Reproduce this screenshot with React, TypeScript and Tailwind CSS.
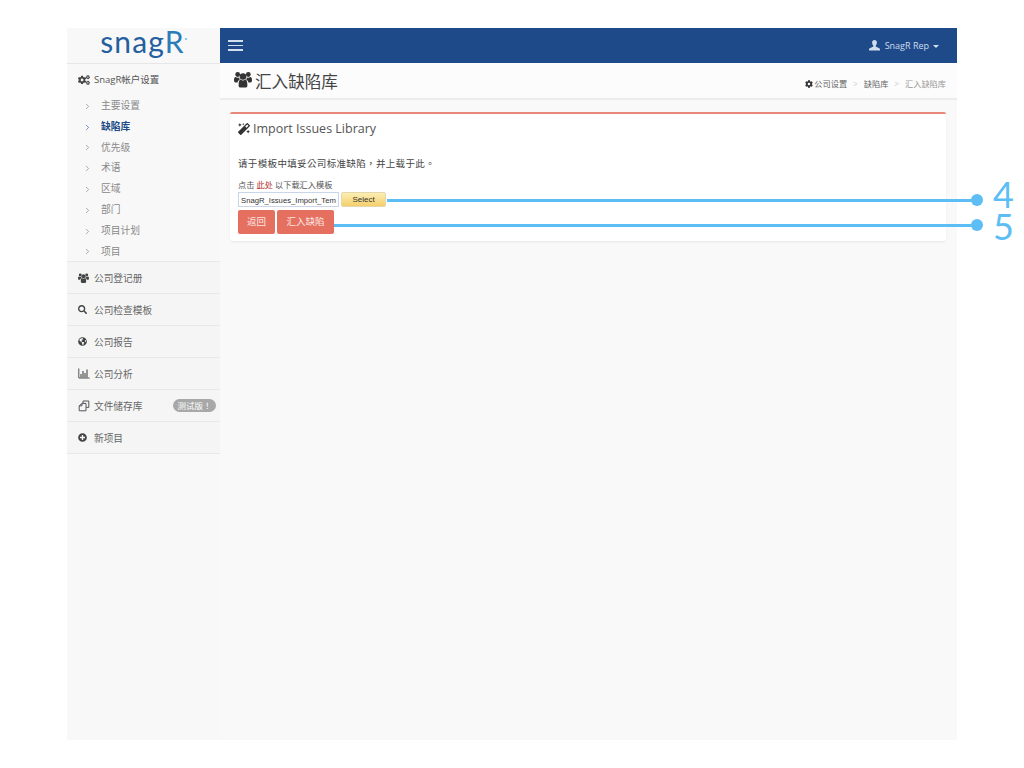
import React from "react";
import { FaSearch, FaGlobeAmericas, FaPlusCircle, FaMagic, FaCog, FaCogs } from "react-icons/fa";
import { ChevronRight } from "lucide-react";

const font = "font-['Open_Sans','Noto_Sans_CJK_SC',sans-serif]";
const sub = ["主要设置", "缺陷库", "优先级", "术语", "区域", "部门", "项目计划", "项目"];

function UsersIcon({ w, h }: { w: number; h: number }) {
  return (
    <svg width={w} height={h} viewBox="0 0 18 16" fill="currentColor">
      <circle cx="9" cy="5" r="3.3" />
      <circle cx="3.7" cy="3" r="2.4" />
      <circle cx="14.3" cy="3" r="2.4" />
      <path d="M4.6 14.2 C4.6 10.6 5.2 8.4 6.6 8.1 C7.4 8.8 8.2 9.1 9 9.1 C9.8 9.1 10.6 8.8 11.4 8.1 C12.8 8.4 13.4 10.6 13.4 14.2 C13.4 15.4 12.6 16 11.6 16 L6.4 16 C5.4 16 4.6 15.4 4.6 14.2 Z" />
      <path d="M0 8.6 C0 6.8 .5 5.6 1.6 5.5 C2.2 6 3 6.3 3.8 6.3 C4.4 6.3 4.9 6.2 5.3 5.9 C5.2 6.9 5.5 7.6 5.9 7.9 C4.6 8.4 3.8 9.6 3.6 11 L1.4 11 C.5 11 0 10.2 0 8.6 Z" />
      <path d="M18 8.6 C18 6.8 17.5 5.6 16.4 5.5 C15.8 6 15 6.3 14.2 6.3 C13.6 6.3 13.1 6.2 12.7 5.9 C12.8 6.9 12.5 7.6 12.1 7.9 C13.4 8.4 14.2 9.6 14.4 11 L16.6 11 C17.5 11 18 10.2 18 8.6 Z" />
    </svg>
  );
}

function UserIcon() {
  return (
    <svg width="11" height="11" viewBox="0 0 11 11" fill="currentColor">
      <path d="M5.5 0 C7 0 7.9 1 7.9 2.6 C7.9 4 7.2 5.2 6.7 5.7 L6.7 6.6 L10.2 8.2 C10.8 8.5 11 8.9 11 9.4 L11 10.4 L0 10.4 L0 9.4 C0 8.9 .2 8.5 .8 8.2 L4.3 6.6 L4.3 5.7 C3.8 5.2 3.1 4 3.1 2.6 C3.1 1 4 0 5.5 0 Z" />
    </svg>
  );
}

function BarsIcon() {
  return (
    <svg width="12" height="11" viewBox="0 0 12 11" fill="none" stroke="#555" strokeWidth="1">
      <path d="M.8 .5 L.8 10 L11.6 10" />
      <path d="M3 9.5 L3 6 M5 9.5 L5 3 M7 9.5 L7 5 M9 9.5 L9 1.5" strokeWidth="1.2" />
    </svg>
  );
}

function CopyIcon() {
  return (
    <svg width="12" height="12" viewBox="0 0 12 12" fill="none" stroke="#555" strokeWidth="1">
      <path d="M5 3.2 L5 1 L10.8 1 L10.8 7.4 L8.2 7.4" />
      <path d="M1.2 5.8 L4 3.4 L8 3.4 L8 10.8 L1.2 10.8 Z" />
      <path d="M4 3.4 L4 5.8 L1.2 5.8" />
    </svg>
  );
}

function MainItem({ icon, label, badge }: { icon: React.ReactNode; label: string; badge?: boolean }) {
  return (
    <div className="h-[32px] flex items-center bg-[#f5f5f5] border-b border-[#e8e8e8] pl-[11px] pr-[4px] text-[9.7px] text-[#666]">
      <span className="w-[16px] flex justify-start text-[#444]">{icon}</span>
      <span className="pt-[4px]">{label}</span>
      {badge && (
        <span className="ml-auto h-[13px] w-[43px] rounded-full bg-[#a8a8a8] text-white text-[8.5px] leading-[13px] text-center font-['Noto_Sans_CJK_TC',sans-serif]">测试版！</span>
      )}
    </div>
  );
}

export default function App() {
  return (
    <div className={`relative min-h-[768px] w-[1024px] overflow-hidden bg-white pt-[28px] ${font}`}>
      <div className="ml-[67px] w-[890px] h-[712px] flex bg-[#f9f9f9]">
        <aside className="w-[153px] shrink-0 bg-[#f8f8f8] flex flex-col">
          <div className="h-[36px] border-b border-[#e7e7e7] flex items-center justify-center pb-[9px]">
            <span className="font-['Lato',sans-serif] text-[30px] leading-none tracking-[1.2px] text-[#24609f]">
              snag<span className="text-[#2b7cb8]">R</span>
            </span>
            <span className="w-[2px] h-[2px] rounded-full bg-[#5bbcf0] mb-[4px]" />
          </div>
          <div className="h-[32px] flex items-center pl-[11px] text-[9.5px] text-[#555]">
            <FaCogs size={12} className="text-[#444] mr-[4px]" />
            <span className="pt-[1px]">SnagR帐户设置</span>
          </div>
          <ul className="h-[166px] border-b border-[#e8e8e8] flex flex-col">
            {sub.map((s, i) => (
              <li key={s} className={`h-[20.8px] shrink-0 flex items-center pl-[16px] text-[9.75px] ${i === 1 ? "text-[#1e4a86] font-bold" : "text-[#888]"}`}>
                <ChevronRight size={9} strokeWidth={1.6} className={`mr-[9px] ${i === 1 ? "text-[#1e4a86]" : "text-[#777]"}`} />
                <span>{s}</span>
              </li>
            ))}
          </ul>
          <MainItem icon={<UsersIcon w={11} h={10} />} label="公司登记册" />
          <MainItem icon={<FaSearch size={9} />} label="公司检查模板" />
          <MainItem icon={<FaGlobeAmericas size={9} />} label="公司报告" />
          <MainItem icon={<BarsIcon />} label="公司分析" />
          <MainItem icon={<CopyIcon />} label="文件储存库" badge />
          <MainItem icon={<FaPlusCircle size={9} />} label="新项目" />
        </aside>
        <main className="flex-1 flex flex-col">
          <header className="h-[35px] bg-[#1e4a8a] flex items-center justify-between pl-[8px] pr-[18px]">
            <div className="flex flex-col gap-[3px] w-[15px]">
              <span className="h-[1.5px] bg-[#d5e0ee]" />
              <span className="h-[1.5px] bg-[#d5e0ee]" />
              <span className="h-[1.5px] bg-[#d5e0ee]" />
            </div>
            <div className="flex items-center text-[#cfdcec] text-[9px] pt-[1px]">
              <span className="mr-[5px] mb-[2px]"><UserIcon /></span>
              <span>SnagR Rep</span>
              <span className="ml-[4px] w-0 h-0 border-x-[3px] border-x-transparent border-t-[3px] border-t-[#d5e0ee]" />
            </div>
          </header>
          <div className="h-[37px] bg-[#fcfcfc] border-b-2 border-[#ececec] flex items-center justify-between pl-[14px] pr-[11px]">
            <div className="flex items-center text-[#333]">
              <span className="mr-[3px] mb-[1px]"><UsersIcon w={18} h={17} /></span>
              <span className="text-[16.6px] text-[#444] pt-[3px]">汇入缺陷库</span>
            </div>
            <div className="flex items-center text-[8.2px] text-[#666] pt-[8px]">
              <FaCog size={8} className="text-[#333] mr-[1px]" />
              <span>公司设置</span>
              <span className="mx-[6px] text-[#ccc]">&gt;</span>
              <span>缺陷库</span>
              <span className="mx-[6px] text-[#ccc]">&gt;</span>
              <span className="text-[#999]">汇入缺陷库</span>
            </div>
          </div>
          <div className="pt-[12px] pl-[10px] pr-[11px]">
            <section className="h-[129px] bg-white border-t-2 border-[#e8887a] rounded-[2px] shadow-[0_1px_2px_rgba(0,0,0,0.08)] px-[8px] flex flex-col">
              <div className="flex items-center h-[26px] mt-[2px] text-[#444]">
                <FaMagic size={12} className="text-[#333] mr-[3px]" />
                <span className="text-[12.5px] text-[#555]">Import Issues Library</span>
              </div>
              <p className="mt-[14px] text-[9.5px] leading-[14px] tracking-[0.35px] text-[#444] font-['Noto_Sans_CJK_TC',sans-serif]">请于模板中填妥公司标准缺陷，并上载于此。</p>
              <p className="mt-[9px] text-[8.2px] leading-[12px] text-[#555]">
                点击 <span className="text-[#b3322c]">此处</span> 以下载汇入模板
              </p>
              <div className="flex items-center gap-[2px] mt-[1px]">
                <div className="w-[101px] h-[15px] border border-[#c9d6ea] bg-white pl-[2px] font-['Liberation_Sans',sans-serif] text-[7.7px] leading-[15px] text-[#333] overflow-hidden whitespace-nowrap">
                  SnagR_Issues_Import_Tem
                </div>
                <div className="w-[45px] h-[15px] rounded-[2px] border border-[#e3d7ab] bg-gradient-to-b from-[#fbeeb2] to-[#f5cf6a] font-['Liberation_Sans',sans-serif] text-[8px] leading-[13px] text-center text-[#333]">
                  Select
                </div>
              </div>
              <div className="flex gap-[2px] mt-[3px]">
                <div className="w-[37px] h-[24px] rounded-[2px] bg-[#e5705f] text-[#fbe6e2] text-[9.5px] flex items-center justify-center">返回</div>
                <div className="w-[57px] h-[24px] rounded-[2px] bg-[#e5705f] text-[#fbe6e2] text-[9.5px] flex items-center justify-center">汇入缺陷</div>
              </div>
            </section>
          </div>
        </main>
      </div>

      <div className="absolute left-[387px] top-[199px] w-[590px] h-[3px] bg-[#5cbef5]" />
      <div className="absolute left-[334px] top-[224px] w-[643px] h-[3px] bg-[#5cbef5]" />
      <div className="absolute left-[971px] top-[194px] w-[12px] h-[12px] rounded-full bg-[#5cbef5]" />
      <div className="absolute left-[971px] top-[219px] w-[12px] h-[12px] rounded-full bg-[#5cbef5]" />
      <div className="absolute left-[993px] top-[180px] font-['Lato',sans-serif] text-[36px] leading-[28px] text-[#5cbef5]">4</div>
      <div className="absolute left-[993px] top-[212px] font-['Lato',sans-serif] text-[36px] leading-[28px] text-[#5cbef5]">5</div>
    </div>
  );
}
